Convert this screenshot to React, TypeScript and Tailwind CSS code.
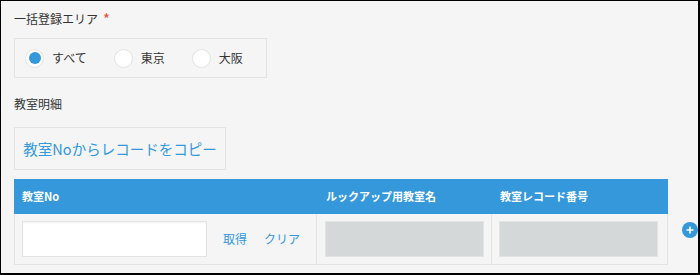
import React from "react";

const font = { fontFamily: '"Noto Sans CJK JP", "Noto Sans", sans-serif' };

function Radio({ label, checked }: { label: string; checked?: boolean }) {
  return (
    <label className="flex items-center gap-[8px]">
      <span className="flex h-[19px] w-[19px] items-center justify-center rounded-full border border-[#e3e3e3] bg-white">
        {checked && <span className="h-[12px] w-[12px] rounded-full bg-[#3498db]" />}
      </span>
      <span className="text-[12px] text-[#333]">{label}</span>
    </label>
  );
}

export default function App() {
  return (
    <div
      className="h-[275px] w-[700px] overflow-hidden border-t border-l border-r-2 border-b-2 border-black bg-[#f5f5f5] text-[#333]"
      style={font}
    >
      <div className="pl-[13px] pt-[8px]">
        <div className="flex items-center gap-[5px] text-[12px] leading-[20px]">
          <span>一括登録エリア</span>
          <span className="text-[15px] leading-[20px] text-[#e74c3c]">*</span>
        </div>

        <div className="mt-[9px] flex h-[40px] w-[253px] items-center gap-[27px] border border-[#e3e3e3] pl-[10px]">
          <Radio label="すべて" checked />
          <Radio label="東京" />
          <Radio label="大阪" />
        </div>

        <div className="mt-[16px] text-[12px] leading-[20px]">教室明細</div>

        <button className="mt-[13px] flex h-[43px] w-[212px] items-center justify-center border border-[#e3e3e3] text-[14.5px] text-[#3498db]">
          教室Noからレコードをコピー
        </button>

        <div className="mt-[9px] flex items-start">
          <div className="w-[654px]">
            <div className="flex h-[35px] bg-[#3498db] text-[11px] font-semibold text-white">
              <div className="flex w-[303px] items-center pl-[8px]">教室No</div>
              <div className="flex w-[175px] items-center pl-[9px]">ルックアップ用教室名</div>
              <div className="flex w-[176px] items-center pl-[8px]">教室レコード番号</div>
            </div>
            <div className="flex h-[51px] border-x border-b border-[#e3e3e3]">
              <div className="flex w-[302px] items-center border-r border-[#e3e3e3] pl-[7px]">
                <input className="h-[36px] w-[185px] border border-[#e3e3e3] bg-white shadow-[inset_0_1px_2px_rgba(0,0,0,0.05)] outline-none" />
                <span className="ml-[16px] text-[12px] text-[#3498db]">取得</span>
                <span className="ml-[17px] text-[12px] text-[#3498db]">クリア</span>
              </div>
              <div className="flex w-[175px] items-center border-r border-[#e3e3e3] pl-[8px]">
                <div className="h-[36px] w-[159px] border border-[#e3e3e3] bg-[#d4d8d9]" />
              </div>
              <div className="flex w-[175px] items-center pl-[7px]">
                <div className="h-[36px] w-[159px] border border-[#e3e3e3] bg-[#d4d8d9]" />
              </div>
            </div>
          </div>
          <div className="ml-[14px] mt-[43px]">
            <svg width="16" height="16" viewBox="0 0 16 16">
              <circle cx="8" cy="8" r="8" fill="#3498db" />
              <path d="M8 4.5v7M4.5 8h7" stroke="#fff" strokeWidth="1.6" />
            </svg>
          </div>
        </div>
      </div>
    </div>
  );
}
